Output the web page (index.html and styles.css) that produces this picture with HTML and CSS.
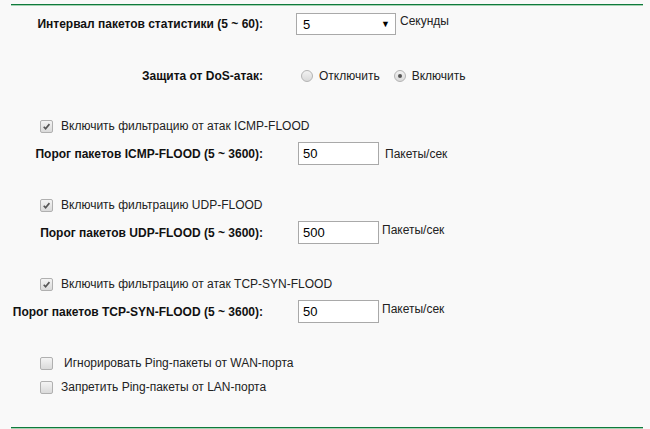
FILE: index.html
```html
<html lang="ru">
  <head>
    <meta charset="UTF-8" />
    <title>Защита</title>
    <link rel="stylesheet" href="styles.css">
  </head>
  <body>
    <div class="page">
      <div class="row">
        <div class="label">Интервал пакетов статистики (5 ~ 60):</div>
        <div class="control">
          <div class="select"><span>5</span><span class="arrow">▼</span></div>
          <span class="unit unit-top">Секунды</span>
        </div>
      </div>

      <div class="row row-dos">
        <div class="label">Защита от DoS-атак:</div>
        <div class="control radios">
          <span class="radio"></span><span class="opt">Отключить</span>
          <span class="radio on"></span><span class="opt">Включить</span>
        </div>
      </div>

      <div class="check-row gap">
        <span class="box checked"><svg viewBox="0 0 12 12"><path d="M3 6.2 L5 8.4 L9.2 3.4" /></svg></span>
        <span>Включить фильтрацию от атак ICMP-FLOOD</span>
      </div>
      <div class="row field">
        <div class="label">Порог пакетов ICMP-FLOOD (5 ~ 3600):</div>
        <div class="control">
          <div class="input">50</div>
          <span class="unit">Пакеты/сек</span>
        </div>
      </div>

      <div class="check-row gap">
        <span class="box checked"><svg viewBox="0 0 12 12"><path d="M3 6.2 L5 8.4 L9.2 3.4" /></svg></span>
        <span>Включить фильтрацию UDP-FLOOD</span>
      </div>
      <div class="row field">
        <div class="label">Порог пакетов UDP-FLOOD (5 ~ 3600):</div>
        <div class="control">
          <div class="input">500</div>
          <span class="unit unit-up">Пакеты/сек</span>
        </div>
      </div>

      <div class="check-row gap">
        <span class="box checked"><svg viewBox="0 0 12 12"><path d="M3 6.2 L5 8.4 L9.2 3.4" /></svg></span>
        <span>Включить фильтрацию от атак TCP-SYN-FLOOD</span>
      </div>
      <div class="row field">
        <div class="label">Порог пакетов TCP-SYN-FLOOD (5 ~ 3600):</div>
        <div class="control">
          <div class="input">50</div>
          <span class="unit unit-up">Пакеты/сек</span>
        </div>
      </div>

      <div class="check-row gap">
        <span class="box"></span>
        <span class="wan">Игнорировать Ping-пакеты от WAN-порта</span>
      </div>
      <div class="check-row near">
        <span class="box"></span>
        <span>Запретить Ping-пакеты от LAN-порта</span>
      </div>

      <div class="bottom-line"></div>
    </div>
  </body>
</html>
```

FILE: styles.css
```css
body {
  margin: 0;
  background-color: #f9f9f9;
  color: #222;
  font-family: "Liberation Sans", Arial, sans-serif;
  font-size: 12px;
}

.page {
  margin: 4px 7px 0 11px;
  border-top: 1px solid #0f7a3c;
  box-shadow: 0 1px 0 #a6d3b4 inset;
  padding-top: 8px;
}

.row {
  display: grid;
  grid-template-columns: 252px 1fr;
  column-gap: 33px;
  align-items: center;
  height: 21px;
}

.row-dos {
  margin-top: 31px;
}

.field {
  height: 23px;
  margin-top: 8px;
}

.label {
  text-align: right;
  font-weight: bold;
  color: #111;
}

.control {
  display: flex;
  align-items: center;
}

.select {
  box-sizing: border-box;
  width: 100px;
  height: 22px;
  border: 1px solid #a9a9a9;
  background-color: #fff;
  display: flex;
  align-items: center;
  justify-content: space-between;
  padding: 0 5px 0 6px;
  color: #000;
  font-size: 13px;
}

.arrow {
  font-size: 9px;
}

.unit {
  margin-left: 6px;
}

.unit-top {
  align-self: flex-start;
  margin-top: 1px;
  margin-left: 4px;
}

.unit-up {
  position: relative;
  top: -3px;
  margin-left: 3px;
}

.input {
  width: 75px;
  height: 21px;
  margin-left: 2px;
  border: 1px solid #a9a9a9;
  background-color: #fff;
  color: #000;
  padding-left: 4px;
  display: flex;
  align-items: center;
  font-size: 13px;
}

.radios {
  padding-left: 5px;
}

.radio {
  width: 10px;
  height: 10px;
  border: 1px solid #b4b4b4;
  border-radius: 50%;
  background: linear-gradient(#f2f2f2, #d9d9d9);
  margin-right: 6px;
  display: flex;
  align-items: center;
  justify-content: center;
}

.radio.on::after {
  content: "";
  width: 4px;
  height: 4px;
  border-radius: 50%;
  background-color: #555;
}

.opt {
  margin-right: 14px;
}

.check-row {
  display: flex;
  align-items: center;
  height: 16px;
  padding-left: 29px;
}

.gap {
  margin-top: 32px;
}

.near {
  margin-top: 8px;
}

.box {
  width: 11px;
  height: 11px;
  border: 1px solid #b0b0b0;
  border-radius: 2px;
  background: linear-gradient(#f4f4f4, #dadada);
  margin-right: 8px;
  display: flex;
}

.box svg {
  width: 11px;
  height: 11px;
  fill: none;
  stroke: #555;
  stroke-width: 1.8;
}

.wan {
  margin-left: 3px;
}

.bottom-line {
  margin-top: 32px;
  border-top: 1px solid #0f7a3c;
  height: 1px;
  background-color: #a6d3b4;
}
```
